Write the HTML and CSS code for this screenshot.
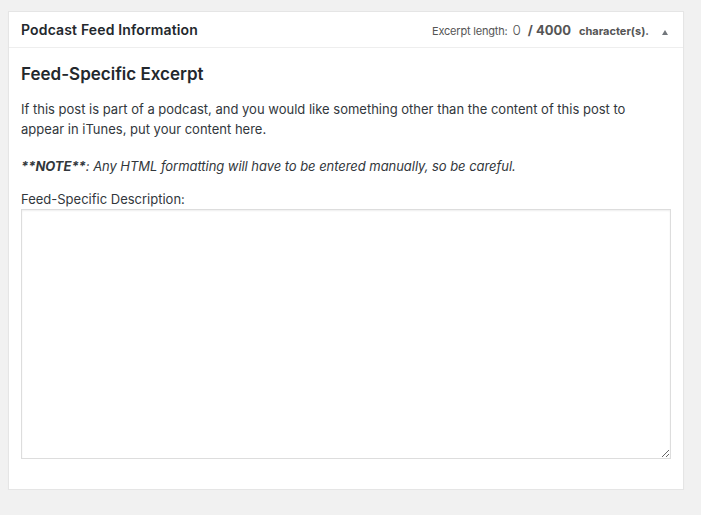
FILE: index.html
```html
<!DOCTYPE html>
<html lang="en">
<head>
<meta charset="utf-8">
<title>Podcast Feed Information</title>
<link rel="stylesheet" href="styles.css">
</head>
<body>
<div class="postbox">
  <div class="postbox-header">
    <h2 class="hndle">Podcast Feed Information</h2>
    <div class="counter">
      <span class="counter-label">Excerpt length:</span>
      <span class="counter-num">0</span>
      <span class="counter-max">/ 4000</span>
      <span class="counter-unit">character(s).</span>
      <span class="toggle-arrow" aria-hidden="true"></span>
    </div>
  </div>
  <div class="inside">
    <h3 class="section-title">Feed-Specific Excerpt</h3>
    <p class="intro">If this post is part of a podcast, and you would like something other than the content of this post to appear in iTunes, put your content here.</p>
    <p class="note"><strong>**NOTE**</strong>: Any HTML formatting will have to be entered manually, so be careful.</p>
    <label class="field-label" for="desc">Feed-Specific Description:</label>
    <textarea id="desc" class="field-textarea"></textarea>
  </div>
</div>
</body>
</html>
```
FILE: styles.css
```css
html, body {
  margin: 0;
  padding: 0;
}
body {
  background: #f1f1f1;
  font-family: Inter, Roboto, "Liberation Sans", sans-serif;
  color: #32373c;
  padding: 11px 0 0 8px;
}
.postbox {
  box-sizing: border-box;
  width: 676px;
  background: #fff;
  border: 1px solid #e5e5e5;
  box-shadow: 0 1px 1px rgba(0, 0, 0, 0.04);
}
.postbox-header {
  display: flex;
  align-items: center;
  justify-content: space-between;
  height: 35px;
  padding: 0 0 0 12px;
  border-bottom: 1px solid #eee;
}
.hndle {
  margin: 0;
  font-size: 14px;
  font-weight: 600;
  letter-spacing: 0.15px;
  color: #23282d;
}
.counter {
  display: flex;
  align-items: baseline;
  color: #555;
}
.counter-label {
  font-size: 11px;
  letter-spacing: -0.2px;
}
.counter-num {
  font-size: 13.5px;
  font-weight: 300;
  margin-left: 5px;
}
.counter-max {
  font-size: 13px;
  font-weight: 700;
  margin-left: 7px;
}
.counter-unit {
  font-size: 11px;
  font-weight: 700;
  margin-left: 8px;
}
.toggle-arrow {
  align-self: center;
  width: 0;
  height: 0;
  border-left: 3.5px solid transparent;
  border-right: 3.5px solid transparent;
  border-bottom: 5px solid #72777c;
  margin: 6px 15px 0 13px;
}
.inside {
  padding: 14px 12px 30px;
}
.section-title {
  margin: 0 0 14px;
  font-size: 17px;
  line-height: 24px;
  font-weight: 600;
  color: #23282d;
}
.intro,
.note,
.field-label {
  font-size: 13px;
  line-height: 19.5px;
}
.intro {
  margin: 0;
}
.note {
  margin: 18px 0 0;
  font-style: italic;
  letter-spacing: -0.05px;
}
.note strong {
  font-weight: 700;
}
.field-label {
  display: block;
  margin-top: 13px;
}
.field-textarea {
  display: block;
  box-sizing: border-box;
  width: 100%;
  height: 250px;
  margin: 0;
  border: 1px solid #ddd;
  border-radius: 0;
  box-shadow: inset 0 1px 2px rgba(0, 0, 0, 0.07);
  background: #fff;
  font-family: inherit;
  font-size: 14px;
}
```
